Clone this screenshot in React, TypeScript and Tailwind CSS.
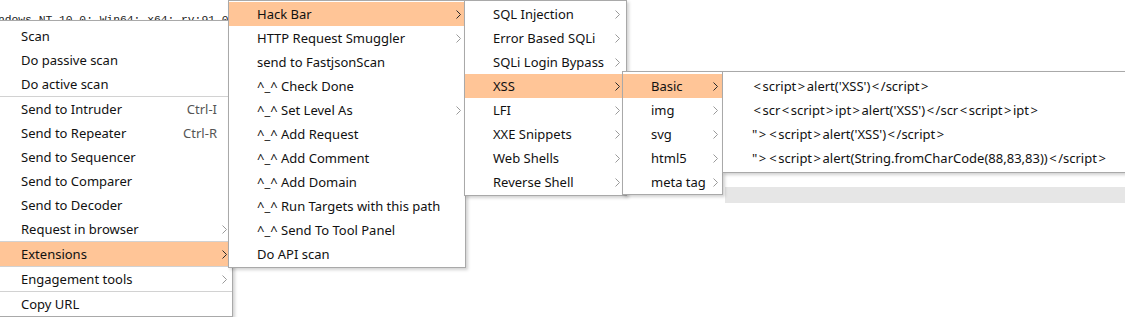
import React from 'react';

type Entry = { label: string; sub?: boolean; shortcut?: string; active?: boolean } | 'sep';

const FONT = { fontFamily: '"Noto Sans", "Open Sans", sans-serif' };

const Chevron = ({ dark }: { dark?: boolean }) => (
    <svg width="5" height="9" viewBox="0 0 5 9" className="shrink-0">
        <polyline points="0.5,0.5 4.5,4.5 0.5,8.5" fill="none" stroke={dark ? '#2a2a2a' : '#9a9a9a'} strokeWidth="1" />
    </svg>
);

const MAIN: Entry[] = [
    { label: 'Scan' },
    { label: 'Do passive scan' },
    { label: 'Do active scan' },
    'sep',
    { label: 'Send to Intruder', shortcut: 'Ctrl-I' },
    { label: 'Send to Repeater', shortcut: 'Ctrl-R' },
    { label: 'Send to Sequencer' },
    { label: 'Send to Comparer' },
    { label: 'Send to Decoder' },
    { label: 'Request in browser', sub: true },
    'sep',
    { label: 'Extensions', sub: true, active: true },
    'sep',
    { label: 'Engagement tools', sub: true },
    'sep',
    { label: 'Copy URL' },
];

const EXTENSIONS: Entry[] = [
    { label: 'Hack Bar', sub: true, active: true },
    { label: 'HTTP Request Smuggler', sub: true },
    { label: 'send to FastjsonScan' },
    { label: '^_^ Check Done' },
    { label: '^_^ Set Level As', sub: true },
    { label: '^_^ Add Request' },
    { label: '^_^ Add Comment' },
    { label: '^_^ Add Domain' },
    { label: '^_^ Run Targets with this path' },
    { label: '^_^ Send To Tool Panel' },
    { label: 'Do API scan' },
];

const HACKBAR: Entry[] = [
    { label: 'SQL Injection', sub: true },
    { label: 'Error Based SQLi', sub: true },
    { label: 'SQLi Login Bypass', sub: true },
    { label: 'XSS', sub: true, active: true },
    { label: 'LFI', sub: true },
    { label: 'XXE Snippets', sub: true },
    { label: 'Web Shells', sub: true },
    { label: 'Reverse Shell', sub: true },
];

const XSS: Entry[] = [
    { label: 'Basic', sub: true, active: true },
    { label: 'img', sub: true },
    { label: 'svg', sub: true },
    { label: 'html5', sub: true },
    { label: 'meta tag', sub: true },
];

const BASIC: Entry[] = [
    { label: "<script>alert('XSS')</script>" },
    { label: "<scr<script>ipt>alert('XSS')</scr<script>ipt>" },
    { label: '"><script>alert(\'XSS\')</script>' },
    { label: '"><script>alert(String.fromCharCode(88,83,83))</script>' },
];

// angle brackets get a little air around them, like the wide CJK-font glyphs in the original
const Label = ({ text }: { text: string }) => (
    <>
        {text.split(/([<>])/).map((part, i) =>
            part === '<' || part === '>' ? (
                <span key={i} className="px-[1.5px]">{part}</span>
            ) : (
                <React.Fragment key={i}>{part}</React.Fragment>
            )
        )}
    </>
);

const MenuRows = ({ entries, pl, chevronPr }: { entries: Entry[]; pl: string; chevronPr: string }) => (
    <>
        {entries.map((e, i) =>
            e === 'sep' ? (
                <div key={i} className="h-px bg-[#d2d2d2]" />
            ) : (
                <div
                    key={i}
                    className={`h-6 flex items-center ${pl} ${chevronPr} ${e.active ? 'bg-[#ffc597]' : ''}`}
                >
                    <span className="flex-1 pt-[2px] whitespace-nowrap text-[13px] text-[#111]">
                        <Label text={e.label} />
                    </span>
                    {e.shortcut && <span className="pt-[2px] text-[13px] text-[#555] mr-[10px]">{e.shortcut}</span>}
                    {e.sub && <Chevron dark={e.active} />}
                </div>
            )
        )}
    </>
);

const App: React.FC = () => {
    return (
        <div className="relative w-[1125px] h-[317px] overflow-hidden bg-white" style={FONT}>
            {/* page content behind the menus */}
            <div className="flex flex-col">
                <div
                    className="h-[28px] pt-[13px] ml-[-2px] whitespace-nowrap text-[11.3px] leading-[14px] text-[#222]"
                    style={{ fontFamily: '"Liberation Mono", monospace' }}
                >
                    ndows NT 10.0; Win64; x64; rv:91.0) Gecko/20100101 Firefox/91.0
                </div>
                <div className="mt-[159px] ml-[725px] h-[16px] bg-[#e6e6e6]" />
            </div>

            {/* main context menu */}
            <div className="absolute left-[-10px] top-[20px] w-[243px] bg-white border border-[#a9a9a9] pt-[3px] shadow-[2px_2px_3px_rgba(0,0,0,0.18)]">
                <MenuRows entries={MAIN} pl="pl-[30px]" chevronPr="pr-[5px]" />
            </div>

            {/* Extensions */}
            <div className="absolute left-[228px] top-0 w-[238px] bg-white border border-[#a9a9a9] py-px shadow-[2px_2px_3px_rgba(0,0,0,0.18)]">
                <MenuRows entries={EXTENSIONS} pl="pl-[28px]" chevronPr="pr-[4px]" />
            </div>

            {/* Hack Bar */}
            <div className="absolute left-[464px] top-0 w-[163px] bg-white border border-[#a9a9a9] py-px shadow-[2px_2px_3px_rgba(0,0,0,0.18)]">
                <MenuRows entries={HACKBAR} pl="pl-[28px]" chevronPr="pr-[6px]" />
            </div>

            {/* XSS */}
            <div className="absolute left-[622px] top-[71px] w-[101px] bg-white border border-[#a9a9a9] pt-[2px] shadow-[2px_2px_3px_rgba(0,0,0,0.18)]">
                <MenuRows entries={XSS} pl="pl-[28px]" chevronPr="pr-[4px]" />
            </div>

            {/* Basic */}
            <div className="absolute left-[722px] top-[71px] w-[440px] bg-white border border-[#a9a9a9] pt-[2px] pb-[2px] shadow-[2px_2px_3px_rgba(0,0,0,0.18)]">
                <MenuRows entries={BASIC} pl="pl-[29px]" chevronPr="pr-[4px]" />
            </div>
        </div>
    );
};

export default App;
